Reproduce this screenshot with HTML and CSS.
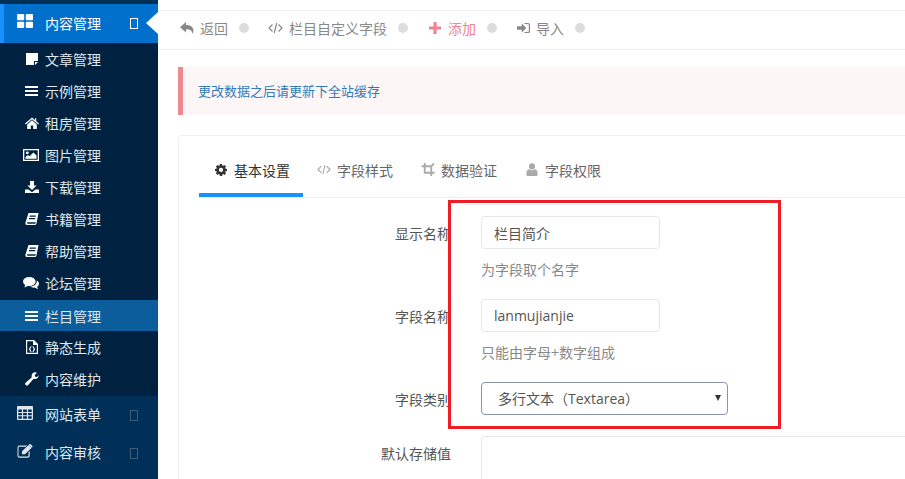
FILE: index.html
```html
<!DOCTYPE html>
<html lang="en">
<head>
  <meta charset="UTF-8">
  <title>栏目自定义字段</title>
  <link rel="stylesheet" href="styles.css">
</head>
<body>
  <svg class="sprite" xmlns="http://www.w3.org/2000/svg">
    <symbol id="i-th" viewBox="0 0 16 14"><rect x="0" y="0" width="7.2" height="6.2" rx="1"/><rect x="8.8" y="0" width="7.2" height="6.2" rx="1"/><rect x="0" y="7.8" width="7.2" height="6.2" rx="1"/><rect x="8.8" y="7.8" width="7.2" height="6.2" rx="1"/></symbol>
    <symbol id="i-note" viewBox="0 0 14 14"><path d="M1 1h12v8h-4v4H1zM10 10h3l-3 3z"/></symbol>
    <symbol id="i-bars" viewBox="0 0 14 14"><rect y="2" width="13" height="2"/><rect y="6" width="13" height="2"/><rect y="10" width="13" height="2"/></symbol>
    <symbol id="i-home" viewBox="0 0 14 14"><path d="M7 1.500 0 7.600l.8.9L7 3.200l6.200 5.300.8-.9-2.800-2.400V2.200H10v1.800zM2.200 8.400V13h3.600V9.500h2.400V13h3.600V8.400L7 4.300z"/></symbol>
    <symbol id="i-pic" viewBox="0 0 16 14"><path fill-rule="evenodd" d="M0 1h16v12H0zM1.300 2.300v9.400h13.400V2.300z"/><circle cx="4.300" cy="4.800" r="1.400"/><path d="M2.500 10.700V9l2.500-2 1.500 1.300L10.500 4.500l3 3v3.200z"/></symbol>
    <symbol id="i-down" viewBox="0 0 14 14"><path d="M5 1h4v4.500h2.600L7 10 2.400 5.500H5z"/><path d="M0 9.500h3.600L7 12.300l3.400-2.800H14V13H0z"/></symbol>
    <symbol id="i-book" viewBox="0 0 14 14"><path fill-rule="evenodd" d="M3.500 1H13.500L11.500 11.500Q11.200 13 9.500 13H2Q0 13 .5 10.500zM4.800 3.500l-.3 1.200h6.200l.3-1.200zM4.200 6l-.3 1.200h6.200l.3-1.200zM2.300 10.300q-.6 1.500.4 1.500h7.300q.6 0 .8-1.500z"/></symbol>
    <symbol id="i-chat" viewBox="0 0 16 14"><ellipse cx="6.300" cy="5.500" rx="6.300" ry="4.600"/><path d="M2.500 8 1.500 11.500 6 9.500z"/><path d="M13.700 4.500C15.200 5.300 16 6.500 16 7.800c0 1.300-.8 2.300-1.900 3l.9 2.500-3.300-1.700c-1.700.2-3.400-.2-4.500-1.100 3.800 0 7-2.300 6.500-6z"/></symbol>
    <symbol id="i-file" viewBox="0 0 14 14"><path fill-rule="evenodd" d="M1 0H9l4 4V14H1zM2.200 1.200v11.600h9.600V5H8V1.200z"/><path d="M5.800 6 3.800 9.200l2 3 .8-.6L5.200 9.200l1.400-2.600zM8.200 6l2 3.200-2 3-.8-.6 1.400-2.400-1.400-2.600z"/></symbol>
    <symbol id="i-wrench" viewBox="0 0 14 14"><path d="M13.700 3.300C13.700 5.400 12 7 10 7c-.5 0-1-.1-1.400-.3L3.200 12.900c-.7.8-1.800.8-2.500.1s-.7-1.800.1-2.500L6.900 5.300C6.700 4.800 6.600 4.400 6.600 3.900 6.600 1.900 8.200.3 10.200.3c.6 0 1.200.2 1.700.4L9.700 3l.5 1.700 1.700.4 1.700-1.800z"/></symbol>
    <symbol id="i-table" viewBox="0 0 16 14"><path fill-rule="evenodd" d="M1 0h14a1 1 0 0 1 1 1v12a1 1 0 0 1-1 1H1a1 1 0 0 1-1-1V1a1 1 0 0 1 1-1zM1.300 3.500v2.500h3.600V3.500zM6.100 3.500v2.500h3.800V3.500zM11.100 3.500v2.500h3.600V3.500zM1.300 7v2.300h3.600V7zM6.100 7v2.300h3.800V7zM11.100 7v2.300h3.600V7zM1.300 10.300v2.400h3.600v-2.400zM6.100 10.300v2.400h3.800v-2.400zM11.100 10.300v2.400h3.600v-2.400z"/></symbol>
    <symbol id="i-edit" viewBox="0 0 16 14"><path d="M2.500 1.500H10L8.800 2.700H2.500a1 1 0 0 0-1 1v7.800a1 1 0 0 0 1 1h8a1 1 0 0 0 1-1V8.200l1.200-1.200v4.700a2 2 0 0 1-2 2H2.500a2 2 0 0 1-2-2V3.500a2 2 0 0 1 2-2z"/><path d="M5 7.300 11.500 1l3 3L8 10.300H5zM12.300.3a1 1 0 0 1 1.400 0l1.500 1.500a1 1 0 0 1 0 1.400l-.6.500-2.900-2.900z"/></symbol>
    <symbol id="i-reply" viewBox="0 0 14 14"><path d="M6 1 0 6.200l6 5.200V8.300C9.500 8.300 11.900 9 12.600 13 15 7.500 12 4.200 6 4.100z"/></symbol>
    <symbol id="i-code" viewBox="0 0 15 14"><path d="M4.500 3.500 1 7l3.500 3.500M10.500 3.500 14 7l-3.500 3.500M8.700 2 6.300 12" fill="none" stroke="currentColor" stroke-width="1.200"/></symbol>
    <symbol id="i-plus" viewBox="0 0 12 12"><path d="M4.400 0h3.200v4.400H12v3.200H7.600V12H4.400V7.600H0V4.400h4.400z"/></symbol>
    <symbol id="i-signin" viewBox="0 0 14 14"><path d="M0 5h5V2l5 5-5 5V9H0z"/><path d="M8 1.500h4a2 2 0 0 1 2 2v7a2 2 0 0 1-2 2H8v-1.300h3.800a.9.900 0 0 0 .9-.9V3.700a.9.900 0 0 0-.9-.9H8z"/></symbol>
    <symbol id="i-cog" viewBox="0 0 14 14"><path fill-rule="evenodd" d="M5.700.5h2.600l.3 1.800 1 .4L11.100 1.700 12.900 3.500 11.900 5l.4 1 1.700.3v2.400L12.300 9l-.4 1 1 1.500-1.800 1.800-1.500-1-1 .4-.3 1.800H5.700l-.3-1.800-1-.4-1.500 1-1.800-1.800 1-1.500-.4-1L0 8.700V6.300L1.700 6l.4-1-1-1.500L2.900 1.700l1.500 1 1-.4zM7 5a2.500 2.500 0 1 0 0 5 2.500 2.500 0 0 0 0-5z"/></symbol>
    <symbol id="i-crop" viewBox="0 0 14 14"><path d="M3.500 0v10.500H14M0 3.500h10.500V14M10.500 3.500 13.500 .5" fill="none" stroke="currentColor" stroke-width="2"/></symbol>
    <symbol id="i-user" viewBox="0 0 12 14"><circle cx="6" cy="3.700" r="3.300"/><path d="M0 13V10.500C0 8 1.500 6.700 3 6.700 3.800 7.400 4.800 7.800 6 7.800s2.200-.4 3-1.100c1.500 0 3 1.300 3 3.800V13a1 1 0 0 1-1 1H1a1 1 0 0 1-1-1z"/></symbol>
  </svg>

  <aside class="sidebar">
    <div class="menu-top is-open">
      <svg class="top-icon"><use href="#i-th"/></svg>
      <span class="menu-title">内容管理</span>
      <span class="tofu"></span>
      <span class="notch"></span>
    </div>
    <ul class="submenu">
      <li><svg><use href="#i-note"/></svg>文章管理</li>
      <li><svg><use href="#i-bars"/></svg>示例管理</li>
      <li><svg><use href="#i-home"/></svg>租房管理</li>
      <li><svg class="wide"><use href="#i-pic"/></svg>图片管理</li>
      <li><svg><use href="#i-down"/></svg>下载管理</li>
      <li><svg><use href="#i-book"/></svg>书籍管理</li>
      <li><svg><use href="#i-book"/></svg>帮助管理</li>
      <li><svg class="wide"><use href="#i-chat"/></svg>论坛管理</li>
      <li class="active"><svg><use href="#i-bars"/></svg>栏目管理</li>
      <li><svg><use href="#i-file"/></svg>静态生成</li>
      <li><svg><use href="#i-wrench"/></svg>内容维护</li>
    </ul>
    <div class="menu-group">
      <div class="menu-top">
        <svg class="top-icon"><use href="#i-table"/></svg>
        <span class="menu-title">网站表单</span>
        <span class="tofu"></span>
      </div>
      <div class="menu-top">
        <svg class="top-icon"><use href="#i-edit"/></svg>
        <span class="menu-title">内容审核</span>
        <span class="tofu"></span>
      </div>
    </div>
  </aside>

  <main class="main">
    <div class="toolbar">
      <span class="tool"><svg class="w14"><use href="#i-reply"/></svg>返回</span><i class="dot"></i>
      <span class="tool"><svg class="w15"><use href="#i-code"/></svg>栏目自定义字段</span><i class="dot"></i>
      <span class="tool tool-add"><svg class="w12"><use href="#i-plus"/></svg>添加</span><i class="dot"></i>
      <span class="tool"><svg class="w13"><use href="#i-signin"/></svg>导入</span><i class="dot"></i>
    </div>

    <div class="content">
      <div class="alert">更改数据之后请更新下全站缓存</div>

      <div class="card">
        <div class="tabs">
          <span class="tab active"><svg><use href="#i-cog"/></svg>基本设置</span>
          <span class="tab"><svg><use href="#i-code"/></svg>字段样式</span>
          <span class="tab"><svg><use href="#i-crop"/></svg>数据验证</span>
          <span class="tab"><svg><use href="#i-user"/></svg>字段权限</span>
        </div>

        <div class="form-row">
          <label>显示名称</label>
          <div>
            <input class="text-input" type="text" value="栏目简介">
            <p class="help">为字段取个名字</p>
          </div>
        </div>
        <div class="form-row">
          <label>字段名称</label>
          <div>
            <input class="text-input" type="text" value="lanmujianjie">
            <p class="help">只能由字母+数字组成</p>
          </div>
        </div>
        <div class="form-row row-select">
          <label>字段类别</label>
          <div class="select-wrap">
            <select class="select-input"><option>多行文本（Textarea）</option></select>
          </div>
        </div>
        <div class="form-row">
          <label>默认存储值</label>
          <textarea class="area-input"></textarea>
        </div>
      </div>
    </div>
  </main>

  <div class="highlight"></div>
</body>
</html>
```

FILE: styles.css
```css
* {
  box-sizing: border-box;
}

html, body {
  height: 100%;
  overflow: hidden;
}

body {
  display: flex;
  margin: 0;
  background: #fff;
  color: #555;
  font-family: "Open Sans", "Noto Sans CJK SC", sans-serif;
  font-size: 14px;
}

.sprite {
  display: none;
}

svg {
  fill: currentColor;
}

/* sidebar */
.sidebar {
  flex: none;
  width: 158px;
  height: 479px;
  padding-top: 4px;
  background: #002f57;
  color: #dfe6ec;
  overflow: hidden;
}

.menu-top {
  position: relative;
  display: flex;
  align-items: center;
  height: 38px;
  padding: 0 0 2px 17px;
}

.menu-top.is-open {
  height: 39px;
  background: #0070cc;
  border-left: 4px solid #1890ff;
  padding-left: 13px;
  color: #fff;
}

.top-icon {
  width: 16px;
  height: 14px;
  margin-right: 12px;
  margin-top: -3px;
}

.tofu {
  position: absolute;
  left: 130px;
  top: 14px;
  width: 8px;
  height: 11px;
  border: 1px solid #3f5d78;
}

.is-open .tofu {
  left: 126px;
  border-color: #fff;
}

.notch {
  position: absolute;
  right: 0;
  top: 8px;
  border-top: 11px solid transparent;
  border-bottom: 11px solid transparent;
  border-right: 12px solid #fff;
}

.submenu {
  margin: 0;
  padding: 0;
  height: 353px;
  list-style: none;
  background: #002240;
}

.submenu li {
  display: flex;
  align-items: center;
  height: 32px;
  padding-left: 25px;
}

.submenu li.active {
  height: 31px;
  margin-top: 1px;
  background: #0b5d9b;
}

.submenu svg {
  flex: none;
  width: 14px;
  height: 14px;
  margin-right: 6px;
  color: #fff;
}

.submenu svg.wide {
  width: 16px;
  margin-left: -2px;
}

/* main column */
.main {
  flex: none;
  width: 747px;
  padding-top: 10px;
  overflow: hidden;
}

.toolbar {
  display: flex;
  align-items: center;
  height: 40px;
  padding: 0 0 4px 22px;
  border-top: 1px solid #eee;
  border-bottom: 1px solid #eee;
  color: #888;
}

.tool {
  display: flex;
  align-items: center;
}

.tool svg {
  height: 14px;
  margin-right: 6px;
}

.tool svg.w14 { width: 14px; }
.tool svg.w15 { width: 15px; }
.tool svg.w12 { width: 12px; margin: 0 7px 0 2px; }
.tool svg.w13 { width: 13px; margin: 0 6px 0 2px; }

.tool-add {
  color: #f0848f;
}

.dot {
  width: 10px;
  height: 10px;
  margin: 0 19px 0 11px;
  border-radius: 50%;
  background: #ddd;
}

.tool-add + .dot {
  margin-right: 18px;
}

.content {
  padding: 17px 0 0 20px;
}

.alert {
  width: 800px;
  height: 48px;
  padding-left: 15px;
  line-height: 48px;
  border-left: 5px solid #f0868e;
  background: #fdf6f6;
  color: #337ab7;
  font-size: 13px;
}

.card {
  width: 800px;
  margin-top: 20px;
  padding: 14px 20px 0;
  border: 1px solid #eee;
  border-radius: 4px;
}

.tabs {
  display: flex;
  height: 48px;
  margin-bottom: 18px;
  border-bottom: 1px solid #eef0f4;
}

.tab {
  display: flex;
  align-items: center;
  height: 47px;
  padding: 0 14px 8px;
  color: #666;
}

.tab svg {
  width: 14px;
  height: 13px;
  margin-right: 6px;
  color: #aaa;
}

.tab.active {
  padding: 0 13px 4px 16px;
  border-bottom: 4px solid #1890ff;
  color: #333;
}

.tab.active svg {
  width: 12px;
  margin-right: 7px;
  color: #333;
}

.form-row {
  display: flex;
  margin-bottom: 19px;
}

.form-row label {
  flex: none;
  width: 252px;
  margin-right: 30px;
  padding-top: 7px;
  line-height: 21px;
  text-align: right;
  color: #555;
}

.text-input {
  display: block;
  width: 179px;
  height: 33px;
  padding: 0 12px;
  border: 1px solid #e4e7ed;
  border-radius: 4px;
  color: #555;
  font: inherit;
}

.help {
  margin: 10px 0 0;
  line-height: 21px;
  color: #888;
}

.row-select {
  margin-bottom: 21px;
}

.select-wrap {
  position: relative;
  width: 247px;
}

.select-wrap::after {
  content: "";
  position: absolute;
  right: 7px;
  top: 13px;
  border-left: 3px solid transparent;
  border-right: 3px solid transparent;
  border-top: 6px solid #333;
}

.select-input {
  display: block;
  width: 247px;
  height: 33px;
  padding: 0 16px;
  appearance: none;
  background: #fff;
  border: 1px solid #8a94a8;
  border-radius: 4px;
  color: #555;
  font: inherit;
}

.area-input {
  display: block;
  width: 500px;
  height: 120px;
  border: 1px solid #e4e7ed;
  border-radius: 4px;
  resize: none;
}

/* red annotation over the form */
.highlight {
  position: absolute;
  left: 448px;
  top: 200px;
  width: 333px;
  height: 229px;
  border: 3px solid #ee1c25;
}
```
